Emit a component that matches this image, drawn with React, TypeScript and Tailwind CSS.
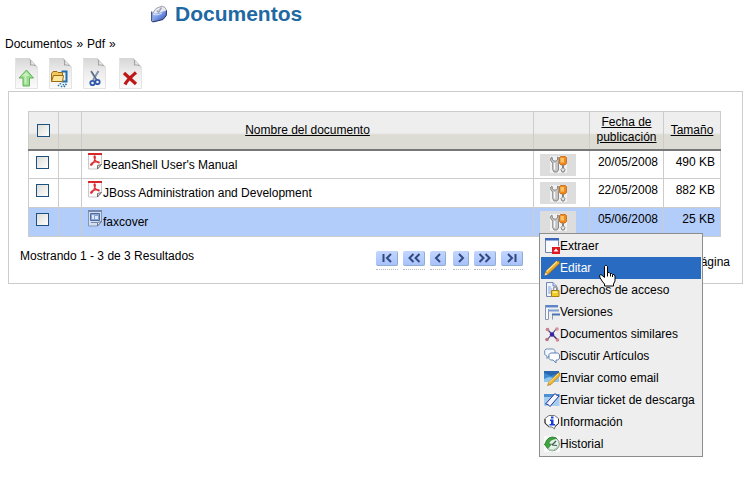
import type { ReactNode } from "react";

type Doc = { name: string; date: string; size: string; kind: "pdf" | "img"; selected?: boolean };

const docs: Doc[] = [
  { name: "BeanShell User's Manual", date: "20/05/2008", size: "490 KB", kind: "pdf" },
  { name: "JBoss Administration and Development", date: "22/05/2008", size: "882 KB", kind: "pdf" },
  { name: "faxcover", date: "05/06/2008", size: "25 KB", kind: "img", selected: true },
];

function FolderIcon() {
  return (
    <svg width="16" height="18" viewBox="0 0 16 18" aria-hidden="true">
      <defs>
        <linearGradient id="folder" x1="0" y1="0" x2="1" y2="1">
          <stop offset="0" stopColor="#c3d2fa" />
          <stop offset="0.45" stopColor="#7d9ce8" />
          <stop offset="1" stopColor="#2444a4" />
        </linearGradient>
      </defs>
      <path d="M2.500 7L5 3.500 11 1l3 1.500 1.500 3-1 6H2.500z" fill="#e9ebf1" stroke="#8a8e9c" strokeWidth=".8" />
      <path d="M6 5.500l1.500 2 3-5" fill="none" stroke="#a2a7b5" strokeWidth="1.500" />
      <path d="M.7 6.500C2 7 3 8.500 5 8.500c3 0 5.500-1.500 10-3l.3 5-3.300 4-6 1.500-4.500 1z" fill="url(#folder)" />
      <path d="M.7 6.500v9.500l1 1 4.300-1 6-1.500 3.300-4 .2-5" fill="none" stroke="#20306c" />
      <path d="M2 9c3 1.500 6 .8 9-1" fill="none" stroke="#dbe4ff" />
    </svg>
  );
}

function PageTool({ label, gap, children }: { label: string; gap: string; children: ReactNode }) {
  return (
    <button type="button" aria-label={label} title={label} className={`block ${gap}`}>
      <svg width="23" height="31" viewBox="0 0 23 31" aria-hidden="true">
        <defs>
          <linearGradient id="sheet" x1="0" y1="0" x2="0" y2="1">
            <stop offset="0" stopColor="#d6d6d6" />
            <stop offset="0.45" stopColor="#ececec" />
            <stop offset="1" stopColor="#fbfbfb" />
          </linearGradient>
        </defs>
        <path d="M0 0h14l9 9v21.500H0z" fill="url(#sheet)" />
        <path d="M.5 1v29.500h22V10" fill="none" stroke="#e4e4e4" />
        <path d="M14 0c1.500 3 1.500 5 1 7.500 3-.5 6 0 8 2.500z" fill="#909090" />
        <path d="M14.500 1c2 2 2 4 1.500 5.500 1.500-.3 3 0 4 .5z" fill="#f0f0f0" />
        {children}
      </svg>
    </button>
  );
}

function PdfIcon() {
  return (
    <svg width="14" height="17" viewBox="0 0 14 17" className="shrink-0" aria-hidden="true">
      <path d="M.5.500h13v11l-4 4.500h-9z" fill="#fafafa" stroke="#c9c9cf" />
      <path d="M0 0h14v2H0z" fill="#d8262b" />
      <path d="M13.500 11.500L9.500 16v-3.500z" fill="#ddd" stroke="#575757" strokeWidth=".8" />
      <path d="M6.500 3c1.500 0 .6 3.500-.8 6-1 2-2.200 3.500-3 3 -.5-1 2-2.500 4-3 2-.6 4.500-.5 4.500.4 0 1-2.500-.2-3.800-1.900C6.200 5.800 5.700 3.200 6.500 3z" fill="none" stroke="#dd3036" strokeWidth="1.300" />
    </svg>
  );
}

function ImageIcon() {
  return (
    <svg width="14" height="17" viewBox="0 0 14 17" className="shrink-0" aria-hidden="true">
      <path d="M.5.500h13v11l-4 4.500h-9z" fill="#d5deee" stroke="#8296b8" />
      <path d="M0 0h14v2H0z" fill="#7488ab" />
      <path d="M2.500 3.500h9v7h-9z" fill="#8ba5d3" stroke="#506c9f" />
      <path d="M4 5h2v4H4zM7 6h3v3H7z" fill="#dce7fa" />
      <path d="M3 12h6v1H3z" fill="#6f86ad" />
      <path d="M13.500 11.500L9.500 16v-3.500z" fill="#e9eef8" stroke="#53617c" strokeWidth=".8" />
    </svg>
  );
}

function ToolsIcon() {
  return (
    <svg width="17" height="17" viewBox="0 0 17 17" aria-hidden="true">
      <path d="M0 0h17v17H0z" fill="#f1f1f1" />
      <path d="M2 1L.7 2v2.500l2 2.500v6.500L4 16h3l1.500-2V7L9 4.500V2L7.500 1v3L6 5H4L2.500 4z" fill="#c4c4c4" stroke="#777" strokeWidth=".8" />
      <path d="M4.500 7v6.500" stroke="#fafafa" strokeWidth="1.500" />
      <path d="M9.500 1.500l1-1h5l1 1v6L15 9h-4L9.500 7.500z" fill="#f08a1c" stroke="#b45b10" strokeWidth=".7" />
      <path d="M10.500 2H14v4.500h-3.500z" fill="#ffc266" />
      <path d="M12.500 9.500V12L11 13.500l1 2.500h2l1-2.500-1.500-1.500V9.500z" fill="#e2e2e2" stroke="#686868" strokeWidth=".8" />
    </svg>
  );
}

function MenuIcon({ children }: { children: ReactNode }) {
  return (
    <svg width="16" height="16" viewBox="0 0 16 16" className="shrink-0" aria-hidden="true">
      {children}
    </svg>
  );
}

const menuItems: { label: string; icon: ReactNode; active?: boolean }[] = [
  {
    label: "Extraer",
    icon: (
      <>
        <path d="M2 1h12v13H2z" fill="#f8faff" />
        <path d="M1 0h14v2.500H1z" fill="#3b66b8" />
        <path d="M1.500 2v12.500H9M14.500 2v6" fill="none" stroke="#7583a4" />
        <path d="M8 9h8v7H8z" fill="#dc1820" />
        <path d="M12 10.500l2.500 3h-5z" fill="#fff" />
      </>
    ),
  },
  {
    label: "Editar",
    active: true,
    icon: (
      <>
        <path d="M.8 15.200L2 11.500 12.500 1l2.700.3.300 2.200L4.500 14z" fill="#edaa27" stroke="#8d6420" strokeWidth=".7" />
        <path d="M2.500 11.500L13 1.500" stroke="#ffe69a" strokeWidth="1.200" />
        <path d="M.5 15.500l1-3 2 2z" fill="#f5dfbd" />
      </>
    ),
  },
  {
    label: "Derechos de acceso",
    icon: (
      <>
        <path d="M2.500.500H9L12.500 4v10.500h-10z" fill="#eff4ff" stroke="#7187b8" />
        <path d="M9 .5V4h3.500" fill="#c8d6f2" stroke="#7187b8" />
        <path d="M4 5h3M4 7h4M4 9h3M4 11h3" stroke="#88a4dc" />
        <path d="M9.500 9V7a2 2 0 0 1 4 0v2" fill="none" stroke="#9a9a9a" strokeWidth="1.300" />
        <path d="M7.500 8.500h7.500v6H7.500z" fill="#f3cb25" stroke="#a98310" />
        <path d="M9 9.500h4v1.500H9z" fill="#fff09a" />
      </>
    ),
  },
  {
    label: "Versiones",
    icon: (
      <>
        <path d="M1 1h12v3H5v11H1z" fill="#f7f9fd" />
        <path d="M1 1h13v2.500H1z" fill="#5f84c5" />
        <path d="M1.500 1v14.500H4M4.500 5v10.500" fill="none" stroke="#8795b2" />
        <path d="M4 5.500h11v2H4z" fill="#7d9ed6" />
        <path d="M8 9.500h8v2H8z" fill="#4d73b7" />
        <path d="M8.500 11v4.500" stroke="#8795b2" />
      </>
    ),
  },
  {
    label: "Documentos similares",
    icon: (
      <>
        <path d="M3 3l10.500 11M13 2L3 14M8 8l5 5" stroke="#4b3c6f" strokeWidth="1.100" />
        <circle cx="3.500" cy="3.500" r="1.800" fill="#c7808c" />
        <circle cx="13" cy="3" r="1.800" fill="#d5939b" />
        <circle cx="3" cy="13.500" r="1.800" fill="#b27684" />
        <circle cx="13.500" cy="14" r="1.800" fill="#cf8690" />
        <circle cx="8" cy="8.500" r="2.200" fill="#3a25a8" />
      </>
    ),
  },
  {
    label: "Discutir Artículos",
    icon: (
      <>
        <path d="M2 1h7.500l1.500 1.500v4L9.500 8H5l-2 2.500V8L.7 6.500v-4z" fill="#f4f8ff" stroke="#6f8fb9" />
        <path d="M6.500 5h7l2 1.500v4L13.500 12H12v3l-3-3H6.500L5 10.500v-4z" fill="#fff" stroke="#5e83b4" />
      </>
    ),
  },
  {
    label: "Enviar como email",
    icon: (
      <>
        <path d="M0 1h15v11H0z" fill="#3f8cd3" />
        <path d="M0 12V9l5-2 5 1 5-2v6z" fill="#91c5ed" />
        <path d="M0 1h15v2L7 6 0 3z" fill="#2966b0" />
        <path d="M3.500 15.500L5 12 14 3l2 .2v2.300L7 14.500z" fill="#f4b72b" stroke="#94701e" strokeWidth=".6" />
        <path d="M5 12.500l9.500-9" stroke="#ffe99b" />
      </>
    ),
  },
  {
    label: "Enviar ticket de descarga",
    icon: (
      <>
        <path d="M0 2h15.500v12H0z" fill="#a5cdf0" />
        <path d="M0 2h15.500v3H0z" fill="#4e91d0" />
        <path d="M1.500 12L11 1.500c1 1.500 2 2 4 2.500L6 14.500c-1-1.500-2.500-2.500-4.500-2.500z" fill="#f3f5fa" stroke="#26369c" />
      </>
    ),
  },
  {
    label: "Información",
    icon: (
      <>
        <path d="M5 1.500h5.500l4 3v5l-3.500 3-.5 2.500-2.500-2H5L1 9.500v-5z" fill="#fff" stroke="#777" />
        <path d="M1 5v4l4 3.500M14.500 5v4.500L11 12.500" fill="none" stroke="#333" />
        <path d="M7 2.500h2.500v2H7zM6 5.500h3.500v4.500H11v1.500H5.500V10H7V7H6z" fill="#173bdc" />
      </>
    ),
  },
  {
    label: "Historial",
    icon: (
      <>
        <path d="M0 0h16v16H0z" fill="#fafafa" />
        <circle cx="8.500" cy="8" r="6.800" fill="#e5f1e7" stroke="#70917a" />
        <path d="M13 2.500C8-.8 2 2 1.500 8L0 8l4 4.500L7.500 8H5c0-3 3-5 8-5.500z" fill="#3fa63d" stroke="#24742a" strokeWidth=".6" />
        <path d="M8 9l4-4M8 9l5 .500" stroke="#3c5952" strokeWidth="1.200" />
        <path d="M4 12.500c3 3 8 2 10-2" fill="none" stroke="#a9c7b0" strokeWidth="1.500" />
      </>
    ),
  },
];

function HandCursor() {
  return (
    <svg width="17" height="22" viewBox="0 0 17 22" className="pointer-events-none absolute top-[31px] left-[59px]" aria-hidden="true">
      <path
        d="M5.500 1.500L6.500.500h1l1 1v6h1.500l1 1h1.500l1 1H15l1 1.500v5l-1.500 3v2h-9v-2L3 16l-2-3.500-.5-2 1.500-1L5 12l.5.500z"
        fill="#fff"
        stroke="#000"
      />
      <path d="M8.500 7.500v4M11.500 8.500v3M13.500 10v2" stroke="#000" />
    </svg>
  );
}

function ContextMenu() {
  return (
    <div className="absolute top-[22px] -left-px z-10 w-[164px] border border-[#8d8d8d] bg-[#eee] px-px py-px text-left">
      <ul role="menu">
        {menuItems.map((item) => (
          <li key={item.label} role="none">
            <button
              type="button"
              role="menuitem"
              className={`flex h-[22px] w-full items-center pl-[3px] whitespace-nowrap ${item.active ? "bg-[#296bc0] text-white" : ""}`}
            >
              <MenuIcon>{item.icon}</MenuIcon>
              {item.label}
            </button>
          </li>
        ))}
      </ul>
      <HandCursor />
    </div>
  );
}

function PagerButton({ label, path, wide }: { label: string; path: string; wide?: boolean }) {
  return (
    <button type="button" aria-label={label} className="border-b border-dotted border-[#bbb] pb-[3px]">
      <span
        className={`flex h-[15px] items-center justify-center rounded-xs border-r border-b border-[#8eaed0] bg-linear-to-b from-[#c3d6ff] to-[#a9c2fb] ${wide ? "w-[22px]" : "w-4"}`}
      >
        <svg width="14" height="10" viewBox="0 0 14 10" aria-hidden="true">
          <path d={path} fill="none" stroke="#304a80" strokeWidth="2" />
        </svg>
      </span>
    </button>
  );
}

function CheckBox({ label }: { label: string }) {
  return (
    <input
      type="checkbox"
      aria-label={label}
      className="block size-[13px] appearance-none border border-[#1c5180] bg-linear-to-br from-[#dcdcd7] to-white"
    />
  );
}

export default function App() {
  const th = "border border-[#ccc] border-b-2 border-b-[#777] p-0 font-normal";
  const td = "border border-[#ccc] p-0 align-top";
  return (
    <main className="min-h-screen bg-white font-['Liberation_Sans',Arial,sans-serif] text-[12px] leading-[15px] text-black">
      <header className="flex h-[27px] items-center gap-2 pl-[151px]">
        <FolderIcon />
        <h1 className="text-[21px] leading-[27px] font-bold text-[#1f69a3]">Documentos</h1>
      </header>

      <nav className="mt-[10px] flex gap-1 pl-[5px]" aria-label="Ruta">
        <a href="#documentos">Documentos</a>
        <span>»</span>
        <a href="#pdf">Pdf</a>
        <span>»</span>
      </nav>

      <div className="mt-[6px] flex pl-[15px]">
        <PageTool label="Subir" gap="mr-[11px]">
          <path d="M11.500 12l7 8h-4v8h-6.500v-8h-4z" fill="#9bdc8e" stroke="#62b25a" />
          <path d="M11.500 14l3 4h-3v8h-2v-8h-3z" fill="#c8f0bd" />
        </PageTool>
        <PageTool label="Comprimir" gap="mr-[11px]">
          <path d="M12.500 13.500h5v10h-5" fill="none" stroke="#1f6fae" strokeWidth="2" />
          <path d="M2.500 15.500l1.500-2h4l1 1h4.500v9h-11z" fill="#f2c75c" stroke="#9b6d15" />
          <path d="M4.500 17.500h10l-1 6h-11z" fill="#ffe69a" stroke="#9b6d15" />
          <path d="M9 28l3-3M12 29l3-3M15 29l3-4" stroke="#2370ae" strokeWidth="1.500" strokeDasharray="1.500 1" />
        </PageTool>
        <PageTool label="Cortar" gap="mr-[13px]">
          <path d="M8 13l5.500 9M15.500 13L10 22" stroke="#8293aa" strokeWidth="2" />
          <path d="M8.500 13.500l5 8" stroke="#43536d" />
          <circle cx="9.500" cy="25" r="2.200" fill="none" stroke="#3159ab" strokeWidth="1.800" />
          <circle cx="14.500" cy="24" r="2.200" fill="none" stroke="#3159ab" strokeWidth="1.800" />
        </PageTool>
        <PageTool label="Eliminar" gap="mr-0">
          <path d="M5 15l12 11M17 14.500C13 18 8 22 6 26.500" fill="none" stroke="#bd1717" strokeWidth="3.200" />
        </PageTool>
      </div>

      <section className="mx-2 mt-[2px] border border-[#ccc] pt-[19px] pr-[21px] pl-[19px]">
        <table className="w-full table-fixed border-collapse">
          <colgroup>
            <col className="w-[30px]" />
            <col className="w-[23px]" />
            <col />
            <col className="w-14" />
            <col className="w-[74px]" />
            <col className="w-[57px]" />
          </colgroup>
          <thead>
            <tr className="h-[38px] bg-linear-to-b from-[#eee] from-55% to-[#dddcd4] to-60%">
              <th className={`${th} pl-2`}>
                <CheckBox label="Seleccionar todo" />
              </th>
              <th className={th} />
              <th className={th}>
                <a href="#nombre" className="underline">
                  Nombre del documento
                </a>
              </th>
              <th className={th} />
              <th className={th}>
                <a href="#fecha" className="underline">
                  Fecha de publicación
                </a>
              </th>
              <th className={th}>
                <a href="#tamano" className="underline">
                  Tamaño
                </a>
              </th>
            </tr>
          </thead>
          <tbody>
            {docs.map((doc) => (
              <tr key={doc.name} className={`h-[29px] ${doc.selected ? "bg-[#b3cdfa]" : "bg-white"}`}>
                <td className={`${td} pt-[5px] pl-[7px]`}>
                  <CheckBox label={doc.name} />
                </td>
                <td className={td} />
                <td className={`${td} pt-[2px] pl-[6px]`}>
                  <a href="#doc" className="flex items-end gap-px">
                    {doc.kind === "pdf" ? <PdfIcon /> : <ImageIcon />}
                    <span className="-mb-[3px]">{doc.name}</span>
                  </a>
                </td>
                <td className={`${td} pt-[3px] pl-[6px]`}>
                  <div className="relative w-9">
                    <button
                      type="button"
                      aria-label={`Acciones: ${doc.name}`}
                      className="flex h-[22px] w-9 items-center justify-center bg-[#ddd]"
                    >
                      <ToolsIcon />
                    </button>
                    {doc.selected && <ContextMenu />}
                  </div>
                </td>
                <td className={`${td} pt-1 pr-[5px] text-right`}>{doc.date}</td>
                <td className={`${td} pt-1 pr-[5px] text-right`}>{doc.size}</td>
              </tr>
            ))}
          </tbody>
        </table>

        <footer className="-mr-[9px] -ml-2 flex h-[46px] items-start pt-3">
          <p className="w-[356px]">Mostrando 1 - 3 de 3 Resultados</p>
          <div className="flex gap-[7px] pt-[2px]">
            <div className="flex gap-[5px]">
              <PagerButton wide label="Primera" path="M3.500 1v8M11 1L7 5l4 4" />
              <PagerButton wide label="Retroceder" path="M6.500 1l-4 4 4 4M12.500 1l-4 4 4 4" />
              <PagerButton label="Anterior" path="M9 1L5 5l4 4" />
            </div>
            <div className="flex gap-[5px]">
              <PagerButton label="Siguiente" path="M5 1l4 4-4 4" />
              <PagerButton wide label="Avanzar" path="M1.500 1l4 4-4 4M7.500 1l4 4-4 4" />
              <PagerButton wide label="Última" path="M3 1l4 4-4 4M10.500 1v8" />
            </div>
          </div>
          <p className="ml-auto pt-[6px]">Página</p>
        </footer>
      </section>
    </main>
  );
}
